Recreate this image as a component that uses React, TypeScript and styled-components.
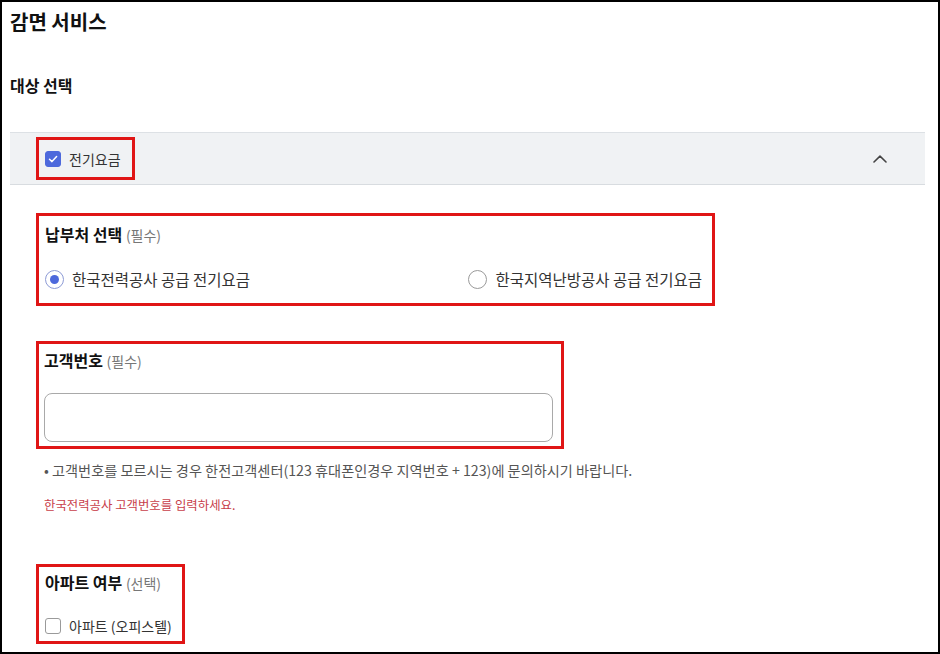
import React from 'react';
import styled, { createGlobalStyle } from 'styled-components';

const GlobalStyle = createGlobalStyle`
  html, body { margin: 0; padding: 0; background: #fff; }
  body { font-family: "Noto Sans CJK KR", "Noto Sans", sans-serif; }
  * { box-sizing: border-box; }
`;

const Frame = styled.div`
  width: 940px;
  height: 654px;
  border: 2px solid #000;
  overflow: hidden;
  padding: 6px 13px 0 8px;
  background: #fff;
  color: #222;
`;

const PageTitle = styled.h1`
  margin: 0;
  font-size: 20px;
  line-height: 28px;
  font-weight: 700;
  color: #111;
`;

const SectionTitle = styled.h2`
  margin: 38px 0 0;
  font-size: 16px;
  line-height: 22px;
  font-weight: 700;
  color: #111;
`;

const AccordionHeader = styled.div`
  margin-top: 36px;
  height: 53px;
  background: #f0f2f4;
  border-top: 1px solid #dde1e5;
  border-bottom: 1px solid #d8dce0;
  padding: 5px 38px 5px 26px;
  display: flex;
  align-items: center;
  justify-content: space-between;
`;

const Marked = styled.div`
  border: 3px solid #e01515;
`;

const HeaderMark = styled(Marked)`
  height: 43px;
  display: flex;
  align-items: center;
  padding: 0 11px 0 6px;
`;

const FieldMark = styled(Marked)<{ $width?: number; $top: number; $pad: string }>`
  width: ${(p) => (p.$width ? `${p.$width}px` : 'fit-content')};
  margin: ${(p) => p.$top}px 0 0 26px;
  padding: ${(p) => p.$pad};
`;

const FieldLabel = styled.div`
  font-size: 16px;
  line-height: 22px;
  font-weight: 700;
  color: #111;
  white-space: nowrap;
`;

const Hint = styled.span`
  font-size: 14px;
  font-weight: 400;
  color: #777;
`;

const CheckLabel = styled.label`
  display: inline-flex;
  align-items: center;
  gap: 8px;
  height: 18px;
  font-size: 14px;
  color: #333;
  white-space: nowrap;
  cursor: pointer;
`;

const CheckBox = styled.span<{ $checked?: boolean }>`
  width: 16px;
  height: 16px;
  flex: none;
  border-radius: 3px;
  display: inline-flex;
  align-items: center;
  justify-content: center;
  background: ${(p) => (p.$checked ? '#4d69dc' : '#fff')};
  border: 1px solid ${(p) => (p.$checked ? '#4d69dc' : '#9a9a9a')};
`;

const Chevron = styled.svg`
  width: 14px;
  height: 8px;
  display: block;
`;

const RadioGroup = styled.div`
  margin-top: 23px;
  display: flex;
  align-items: center;
  justify-content: space-between;
  height: 20px;
`;

const RadioLabel = styled.label`
  display: inline-flex;
  align-items: center;
  gap: 8px;
  font-size: 15.5px;
  line-height: 20px;
  color: #333;
  white-space: nowrap;
  cursor: pointer;
`;

const RadioCircle = styled.span<{ $checked?: boolean }>`
  width: 19px;
  height: 19px;
  flex: none;
  border-radius: 50%;
  border: 1px solid ${(p) => (p.$checked ? '#8d9bd6' : '#9a9a9a')};
  display: inline-flex;
  align-items: center;
  justify-content: center;
  background: #fff;
  &::after {
    content: '';
    width: 9px;
    height: 9px;
    border-radius: 50%;
    background: ${(p) => (p.$checked ? '#4d69dc' : 'transparent')};
  }
`;

const TextInput = styled.input`
  display: block;
  width: 100%;
  height: 49px;
  margin-top: 21px;
  border: 1px solid #a9a9a9;
  border-radius: 8px;
  background: #fff;
  outline: none;
  padding: 0 12px;
  font-size: 15px;
  font-family: inherit;
`;

const Note = styled.p<{ $error?: boolean; $top: number }>`
  margin: ${(p) => p.$top}px 0 0 34px;
  font-size: ${(p) => (p.$error ? '12.4px' : '14.2px')};
  line-height: 18px;
  color: ${(p) => (p.$error ? '#c8404a' : '#555')};
`;

const CheckRow = styled.div`
  margin-top: 23px;
  display: flex;
  align-items: center;
`;

const CheckMark = () => (
  <svg width="12" height="12" viewBox="0 0 12 12" fill="none">
    <path d="M2.5 6.2 L5 8.6 L9.6 3.6" stroke="#fff" strokeWidth="1.5" strokeLinecap="round" strokeLinejoin="round" />
  </svg>
);

export default function App() {
  return (
    <>
      <GlobalStyle />
      <Frame>
        <PageTitle>감면 서비스</PageTitle>
        <SectionTitle>대상 선택</SectionTitle>

        <AccordionHeader>
          <HeaderMark>
            <CheckLabel>
              <CheckBox $checked>
                <CheckMark />
              </CheckBox>
              전기요금
            </CheckLabel>
          </HeaderMark>
          <Chevron viewBox="0 0 14 8" fill="none">
            <path d="M1 7 L7 1.2 L13 7" stroke="#444" strokeWidth="1.6" strokeLinecap="round" strokeLinejoin="round" />
          </Chevron>
        </AccordionHeader>

        <FieldMark $width={679} $top={28} $pad="7px 10px 14px 6px">
          <FieldLabel>
            납부처 선택 <Hint>(필수)</Hint>
          </FieldLabel>
          <RadioGroup>
            <RadioLabel>
              <RadioCircle $checked />
              한국전력공사 공급 전기요금
            </RadioLabel>
            <RadioLabel>
              <RadioCircle />
              한국지역난방공사 공급 전기요금
            </RadioLabel>
          </RadioGroup>
        </FieldMark>

        <FieldMark $width={528} $top={35} $pad="5px 8px 4px 5px">
          <FieldLabel>
            고객번호 <Hint>(필수)</Hint>
          </FieldLabel>
          <TextInput type="text" aria-label="고객번호" />
        </FieldMark>

        <Note $top={12}>• 고객번호를 모르시는 경우 한전고객센터(123 휴대폰인경우 지역번호 + 123)에 문의하시기 바랍니다.</Note>
        <Note $error $top={17}>한국전력공사 고객번호를 입력하세요.</Note>

        <FieldMark $top={50} $pad="4px 10px 6px 6px">
          <FieldLabel>
            아파트 여부 <Hint>(선택)</Hint>
          </FieldLabel>
          <CheckRow>
            <CheckLabel>
              <CheckBox />
              아파트 (오피스텔)
            </CheckLabel>
          </CheckRow>
        </FieldMark>
      </Frame>
    </>
  );
}
